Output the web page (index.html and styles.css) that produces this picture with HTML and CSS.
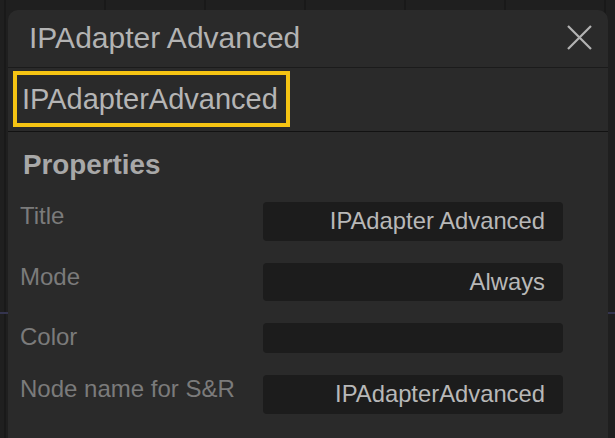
FILE: index.html
```html
<!DOCTYPE html>
<html>
<head>
<meta charset="utf-8">
<link rel="stylesheet" href="styles.css">
</head>
<body>
<div class="panel">
  <div class="header">
    <span class="title">IPAdapter Advanced</span>
    <svg class="close" width="25" height="25" viewBox="0 0 25 25"><path d="M1 1 L24 24 M24 1 L1 24" stroke="#b3b3b3" stroke-width="2.2" fill="none"/></svg>
  </div>
  <div class="name-row">
    <div class="name-box">IPAdapterAdvanced</div>
  </div>
  <div class="props">
    <h2 class="props-title">Properties</h2>
    <div class="row">
      <span class="label">Title</span>
      <div class="value">IPAdapter Advanced</div>
    </div>
    <div class="row">
      <span class="label">Mode</span>
      <div class="value">Always</div>
    </div>
    <div class="row">
      <span class="label">Color</span>
      <div class="value empty"></div>
    </div>
    <div class="row">
      <span class="label">Node name for S&amp;R</span>
      <div class="value">IPAdapterAdvanced</div>
    </div>
  </div>
</div>
</body>
</html>
```

FILE: styles.css
```css
html, body {
  margin: 0;
  padding: 0;
  height: 100%;
}
body {
  background-color: #1f1f1f;
  background-image:
    linear-gradient(to bottom, transparent 312px, #34344e 312px, #34344e 314px, transparent 314px),
    linear-gradient(to right, transparent 4px, #191919 4px, #191919 6px, transparent 6px);
  background-size: 100% 100%, 100px 100%;
  font-family: "Liberation Sans", Arial, sans-serif;
  overflow: hidden;
}
.panel {
  margin: 10px 0 0 8px;
  width: 600px;
  height: 428px;
  background: #2a2a2a;
  border-radius: 10px 10px 0 0;
  display: flex;
  flex-direction: column;
}
.header {
  height: 57px;
  display: flex;
  align-items: center;
  justify-content: space-between;
  padding: 0 16px 0 21px;
  border-bottom: 1px solid #1b1b1b;
}
.title {
  font-size: 30px;
  color: #b3b3b3;
  margin-top: -2px;
}
.close {
  display: block;
  margin-top: -2px;
}
.name-row {
  padding: 3px 5px 4px;
  border-bottom: 1px solid #121212;
}
.name-box {
  display: inline-block;
  box-sizing: border-box;
  width: 277px;
  height: 56px;
  border: 4px solid #f5c413;
  padding: 0 0 0 5px;
  line-height: 48px;
  font-size: 29px;
  color: #b5b5b5;
}
.props {
  padding: 17px 45px 0 12px;
}
.props-title {
  margin: 0 0 21px 3px;
  font-size: 27.8px;
  line-height: 32px;
  font-weight: bold;
  color: #a8a8a8;
}
.row {
  display: flex;
  justify-content: space-between;
  align-items: flex-start;
  margin-bottom: 22px;
}
.label {
  font-size: 24px;
  line-height: 27px;
  color: #7b7b7b;
}
.value {
  box-sizing: border-box;
  width: 300px;
  height: 38.5px;
  padding: 0 18px;
  background: #1c1c1c;
  border-radius: 4px;
  text-align: right;
  font-size: 23.8px;
  line-height: 38.5px;
  color: #b8b8b8;
}
.value.empty {
  height: 30px;
}
```
